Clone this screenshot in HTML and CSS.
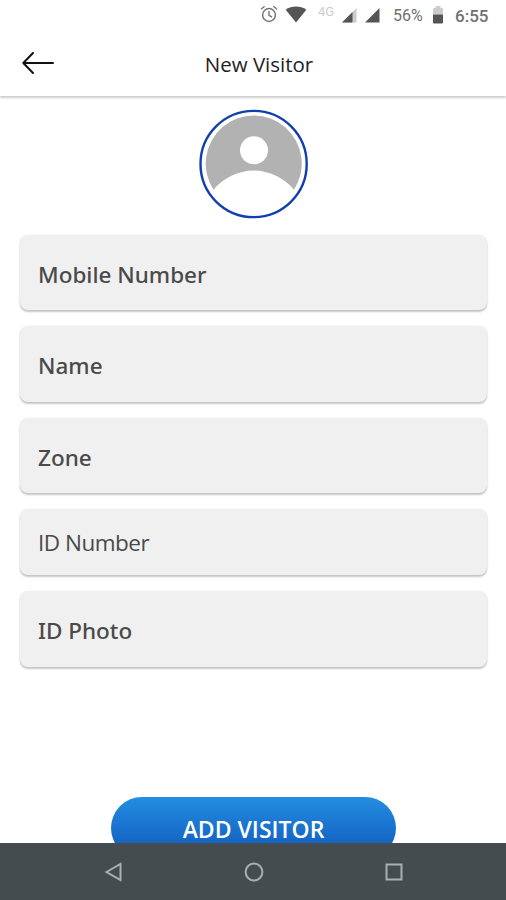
FILE: index.html
```html
<!DOCTYPE html>
<html lang="en">
  <head>
    <meta charset="utf-8" />
    <title>New Visitor</title>
    <meta name="viewport" content="width=device-width, initial-scale=1" />
    <link rel="stylesheet" href="styles.css">
  </head>
  <body>
    <div class="status-bar">
      <svg class="alarm" width="18" height="18" viewBox="0 0 18 18" fill="none" stroke="#777">
        <circle cx="9" cy="10" r="6.4" stroke-width="1.5" />
        <path d="M9 6v4.3l3 1.9M1 4.3l3.6-3M17 4.3l-3.6-3" stroke-width="1.4" />
      </svg>
      <svg class="wifi" width="22" height="17" viewBox="0 0 22 17">
        <path d="M.7 3.7C6.5-.7 15.5-.7 21.3 3.7L11 16.5z" fill="#555" />
      </svg>
      <span class="network">4G</span>
      <svg class="signal" width="15" height="15" viewBox="0 0 15 15">
        <path d="M0 14.5L14.5 0v14.5z" fill="#ccc" />
        <path d="M0 14.5L10.5 4v10.5z" fill="#555" />
      </svg>
      <svg class="signal-full" width="15" height="15" viewBox="0 0 15 15">
        <path d="M0 14.5L14.5 0v14.5z" fill="#555" />
      </svg>
      <span class="percent">56%</span>
      <svg class="battery" width="10" height="19" viewBox="0 0 10 19">
        <path d="M0 4.2Q0 3 1.2 3H2.5V1h5V3h1.3Q10 3 10 4.2V9.5H0z" fill="#ccc" />
        <path d="M0 9.5h10v8q0 1-1 1H1q-1 0-1-1z" fill="#555" />
      </svg>
      <span class="clock">6:55</span>
    </div>
    <div class="topnav">
      <svg class="back" width="34" height="24" viewBox="0 0 34 24" fill="none" stroke="#111" stroke-width="2" stroke-linecap="round" stroke-linejoin="round">
        <path d="M31 12H1.3M11 2L1.3 12L11 22" />
      </svg>
      <h1>New Visitor</h1>
    </div>
    <div class="content">
      <svg class="avatar" width="110" height="110" viewBox="0 0 110 110">
        <circle cx="54.6" cy="55" r="53.1" fill="#fff" stroke="#123fae" stroke-width="2.4" />
        <path d="M14.5 81.5A48 48 0 1 1 95 81.5A52 52 0 0 0 14.5 81.5z" transform="translate(0 -.8)" fill="#b2b2b2" />
        <circle cx="55" cy="41.3" r="14" fill="#fff" />
      </svg>
      <div class="form">
        <div class="field"><span>Mobile Number</span></div>
        <div class="field"><span>Name</span></div>
        <div class="field"><span>Zone</span></div>
        <div class="field field-input"><span>ID Number</span></div>
        <div class="field"><span>ID Photo</span></div>
      </div>
      <button class="add">ADD VISITOR</button>
    </div>
    <div class="navbar">
      <svg width="20" height="20" viewBox="0 0 20 20"><path d="M3.5 10L17.5 2v16z" /></svg>
      <svg width="20" height="20" viewBox="0 0 20 20"><circle cx="10" cy="10" r="8.4" /></svg>
      <svg width="20" height="20" viewBox="0 0 20 20"><path d="M2.5 2.5h15v15h-15z" /></svg>
    </div>
  </body>
</html>
```
FILE: styles.css
```css
* {
  box-sizing: border-box;
}
body {
  margin: 0;
  height: 900px;
  display: flex;
  flex-direction: column;
  overflow: hidden;
  background-color: white;
  font-family: "Open Sans", "Noto Sans", sans-serif;
}
.status-bar {
  height: 32px;
  flex: none;
  display: flex;
  align-items: center;
  padding-left: 260px;
  font-family: Roboto, sans-serif;
  line-height: 20px;
  color: #707070;
}
.status-bar svg {
  flex: none;
}
.alarm {
  margin-top: -4px;
}
.wifi {
  margin: -3px 0 0 7px;
}
.network {
  width: 18px;
  margin: -9px 0 0 11px;
  font-size: 13px;
  color: #ccc;
}
.signal {
  margin: -1px 0 0 6px;
}
.signal-full {
  margin: -1px 0 0 8px;
}
.percent {
  width: 31px;
  margin-left: 13px;
  font-size: 16px;
}
.battery {
  margin: -3px 0 0 9px;
}
.clock {
  margin-left: 12px;
  margin-top: -1px;
  font-size: 17px;
  font-weight: 500;
}
.topnav {
  height: 64px;
  flex: none;
  display: grid;
  grid-template-columns: 1fr auto 1fr;
  align-items: center;
  padding: 0 0 2px 22px;
  box-shadow: 0 2px 2px rgba(0, 0, 0, 0.2);
}
h1 {
  margin: 1px 0 0 -10px;
  font-size: 20.5px;
  font-weight: 400;
  color: #222;
}
.content {
  flex: 1;
  min-height: 0;
  display: flex;
  flex-direction: column;
  align-items: center;
  padding: 13px 19px 0 20px;
  overflow: hidden;
}
.avatar {
  flex: none;
}
.form {
  width: 100%;
  display: flex;
  flex-direction: column;
  gap: 16px;
  margin-top: 15.5px;
}
.field {
  height: 75.5px;
  display: flex;
  align-items: center;
  padding: 4px 0 0 18px;
  border-radius: 8px;
  background-color: #f0f0f0;
  box-shadow: 0 2px 2px rgba(0, 0, 0, 0.22), 0 0 2px rgba(0, 0, 0, 0.08);
  font-family: "Noto Sans", "Open Sans", sans-serif;
  font-size: 22.5px;
  font-weight: 500;
  color: #4a4a4a;
}
.field-input {
  height: 66px;
  padding-top: 1px;
  font-family: "Open Sans", "Noto Sans", sans-serif;
  font-weight: 400;
  letter-spacing: -0.5px;
}
.add {
  flex: none;
  width: 285px;
  height: 62px;
  margin-top: 130px;
  padding-top: 4px;
  border: none;
  border-radius: 31px;
  background: linear-gradient(#238de1, #1565c5 75%);
  font-family: inherit;
  font-size: 23px;
  font-weight: 600;
  color: white;
}
.navbar {
  height: 57px;
  flex: none;
  display: flex;
  justify-content: space-between;
  align-items: center;
  padding: 0 102px 0 103px;
  background-color: #454c50;
}
.navbar svg {
  fill: none;
  stroke: #aaafb1;
  stroke-width: 2;
}
```
